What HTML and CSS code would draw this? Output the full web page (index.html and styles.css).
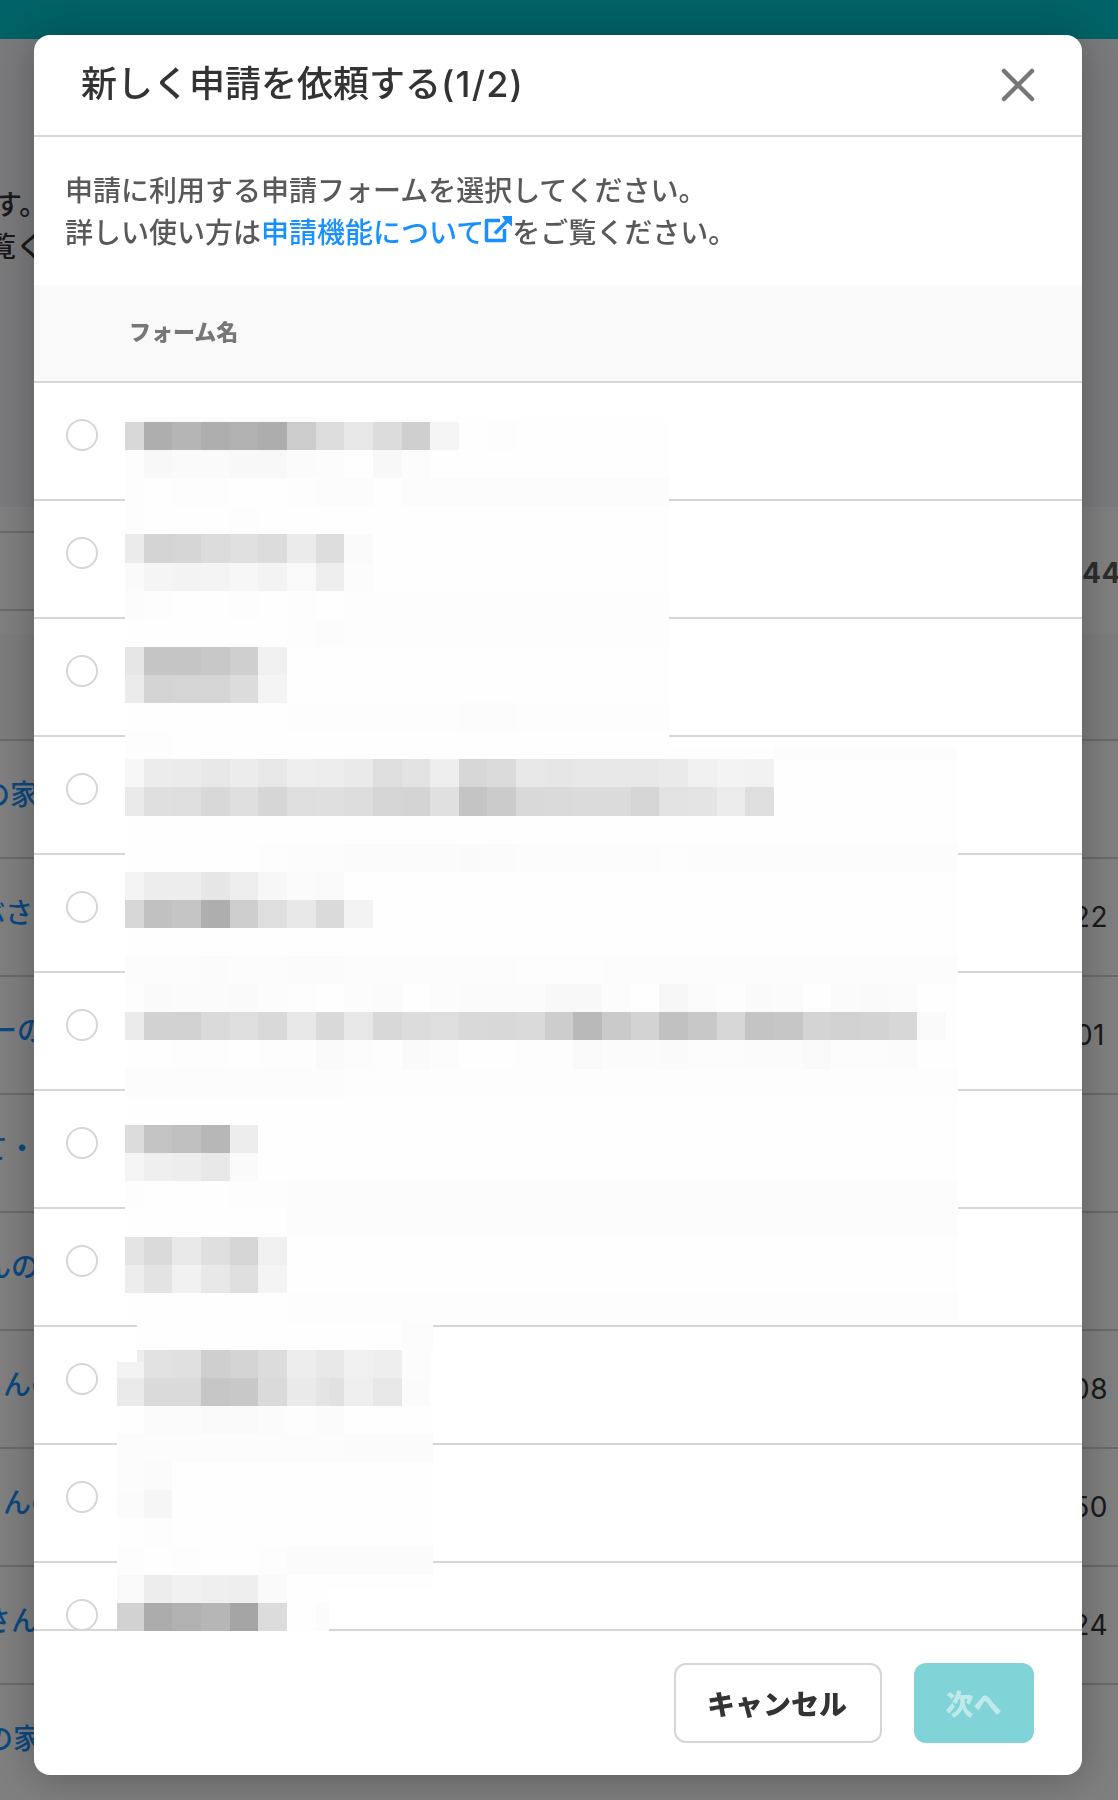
FILE: index.html
```html
<!DOCTYPE html>
<html lang="ja">
<head>
<meta charset="utf-8">
<title>新しく申請を依頼する</title>
<link rel="stylesheet" href="styles.css">
</head>
<body>
<div class="page">
  <header class="topbar"></header>
  <section class="intro"><p class="intro-end">す。</p><p class="intro-more">覧く</p></section>
  <section class="panel">
    <div class="toolbar"><div class="filter"></div><strong class="count">44</strong></div>
    <div class="table-head"></div>
    <div class="entry"><a>の家</a></div>
    <div class="entry"><a>ぶさ</a><span>22</span></div>
    <div class="entry"><a>ーの</a><span class="one">01</span></div>
    <div class="entry"><a>て・</a></div>
    <div class="entry"><a>んの</a></div>
    <div class="entry"><a>んの</a><span>08</span></div>
    <div class="entry"><a>んの</a><span>50</span></div>
    <div class="entry"><a>さん</a><span>24</span></div>
    <div class="entry"><a>の家</a></div>
  </section>
</div>
<div class="overlay">
  <div class="modal" role="dialog" aria-modal="true">
    <header class="modal-header">
      <h1>新しく申請を依頼する<span class="step">(1/2)</span></h1>
      <button class="close" aria-label="閉じる"><svg width="34" height="34" viewBox="0 0 34 34"><path d="M3 3 31 31M31 3 3 31"/></svg></button>
    </header>
    <div class="lead">
      <p>申請に利用する申請フォームを選択してください。</p>
      <p>詳しい使い方は<a>申請機能について<svg class="external" width="28" height="28" viewBox="0 0 28 28"><path d="M16 4.5H2.5V24.5H20.500V13" /><path d="M11 17.500 23.500 4.500"/><path class="tip" d="M18 0H28V10.500L24.500 7.500 20 3.500Z"/></svg></a>をご覧ください。</p>
    </div>
    <div class="list-head">フォーム名</div>
    <div class="list">
      <label class="option"><i class="radio"></i></label>
      <label class="option"><i class="radio"></i></label>
      <label class="option"><i class="radio"></i></label>
      <label class="option"><i class="radio"></i></label>
      <label class="option"><i class="radio"></i></label>
      <label class="option"><i class="radio"></i></label>
      <label class="option"><i class="radio"></i></label>
      <label class="option"><i class="radio"></i></label>
      <label class="option"><i class="radio"></i></label>
      <label class="option"><i class="radio"></i></label>
      <label class="option"><i class="radio"></i></label>
    </div>
    <footer class="modal-footer">
      <button class="btn cancel">キャンセル</button>
      <button class="btn next" disabled>次へ</button>
    </footer>
    <svg class="mosaic" id="mosaic" width="1048" height="1740" viewBox="34 35 1048 1740" shape-rendering="crispEdges"></svg>
  </div>
</div>
<script src="mosaic.js"></script>
</body>
</html>
```
FILE: styles.css
```css
* { box-sizing: border-box; }
body {
  margin: 0;
  height: 1800px;
  overflow: hidden;
  font-family: "Noto Sans CJK JP", sans-serif;
  font-size: 28px;
  font-weight: 500;
  line-height: 42px;
  color: #333;
}
p, h1 { margin: 0; }
button { font: inherit; border: 0; padding: 0; background: none; }

/* Page behind the dialog */
.page { height: 1800px; overflow: hidden; background: #f4f5f9; }
.topbar { height: 39px; background: #00c4cc; }
.intro { height: 468px; padding-top: 143px; white-space: nowrap; }
.intro-end { margin-left: -6px; }
.intro-more { margin-left: -12px; }
.panel { background: #fff; }
.toolbar { display: flex; height: 128px; padding-top: 24px; }
.filter { width: 500px; height: 80px; border: 2px solid #d6d4d4; border-left: 0; }
.count { margin: 21px 0 0 auto; width: 36px; font-family: Inter, sans-serif; font-weight: 700; color: #595959; line-height: 42px; letter-spacing: .5px; }
.table-head { height: 106px; background: #f8f8f8; border-bottom: 2px solid #d6d4d4; }
.entry { display: flex; justify-content: space-between; height: 118px; padding-top: 31px; border-bottom: 2px solid #d6d4d4; white-space: nowrap; }
.entry a { color: #1890ff; margin-left: -18px; }
.entry span { font-family: Inter, sans-serif; font-weight: 400; letter-spacing: .5px; margin: 6px 10px 0 0; }
.entry .one { margin-right: 13px; }
.entry:nth-child(4) a { margin-left: -23px; }
.entry:nth-child(5) a { margin-left: -11px; }
.entry:nth-child(6) a { margin-left: -20px; }
.entry:nth-child(7) a { margin-left: -17px; }
.entry:nth-child(8) a, .entry:nth-child(9) a { margin-left: 3px; }
.entry:nth-child(10) a { margin-left: -17px; }
.entry:nth-child(11) a { margin-left: -15px; }

/* Dialog */
.overlay { position: fixed; inset: 0; display: grid; padding: 35px 36px 25px 34px; background: rgba(0, 0, 0, .5); }
.modal {
  position: relative;
  display: flex;
  flex-direction: column;
  height: 1740px;
  overflow: hidden;
  background: #fff;
  border-radius: 16px;
  box-shadow: 0 4px 40px rgba(0, 0, 0, .27);
}
.modal-header { display: flex; justify-content: space-between; align-items: center; height: 102px; padding: 0 47px; border-bottom: 2px solid #d6d6d6; }
.modal-header h1 { font-size: 36px; font-weight: 500; line-height: 54px; margin-top: -6px; }
.step { font-family: Inter, sans-serif; font-weight: 450; letter-spacing: 1.2px; }
.close { display: flex; }
.close svg { fill: none; stroke: #777; stroke-width: 4.500; stroke-linecap: round; }
.lead { height: 148px; padding: 31px 31px 0; color: #595959; }
.lead a { color: #1890ff; }
.external { margin: 0; vertical-align: -1px; fill: none; stroke: #1890ff; stroke-width: 3.500; stroke-linejoin: round; }
.external .tip { fill: #1890ff; stroke: none; }
.list-head { height: 98px; padding: 0 95px; background: #f9f9f9; border-bottom: 2px solid #d6d6d6; color: #777; font-size: 22px; font-weight: 900; line-height: 91px; }
.list { flex: 1; min-height: 0; overflow: hidden; }
.option { display: block; height: 118px; padding: 36px 32px; border-bottom: 2px solid #d6d6d6; }
.radio { display: block; width: 32px; height: 32px; border: 2px solid #d6d6d6; border-radius: 50%; background: #fff; }
.modal-footer { display: flex; justify-content: flex-end; gap: 32px; height: 146px; padding: 32px 48px; border-top: 2px solid #d6d6d6; }
.btn { height: 80px; border-radius: 12px; font-weight: 900; }
.cancel { width: 208px; border: 2px solid #d6d6d6; color: #333; padding-right: 2px; }
.next { width: 120px; background: #80d3d6; color: #bfe9ea; padding-right: 1px; }
.mosaic { position: absolute; left: 0; top: 0; pointer-events: none; }
```
FILE: mosaic.js
```js
// Pixelated cover over the form names: [row, left edge, grey level per cell, right edge of the last cell]
const strips = [
  [0, 125, 'd8 ae b5 ae b1 ad cc dd e7 dc cf f5 fe fd'],
  [1, 125, 'fd f8 fa fa f8 f8 fb fc fe f8 fc'],
  [2, 125, 'fd fe fd fd fe fe fd fc fc fe fc', 669],
  [3, 125, 'fd fe fe fe fd fe fe fe fe fe', 669],
  [4, 125, 'eb d4 d6 dc e0 dc eb dd fa'],
  [5, 125, 'fa f5 f3 f4 f7 f3 f9 ee fc'],
  [6, 125, 'fc fd fe fe fd fe fd fe fd', 669],
  [7, 125, 'fe fe fe fe fe fe fd fc fd', 669],
  [8, 125, 'e6 c5 c5 c8 cf f0'],
  [9, 125, 'eb d4 d5 d5 dc f4'],
  [10, 125, 'fe fe fe fe fe fe fd fd fd fd fd fd fc fc fd', 669],
  [11, 125, 'fd fd fe'],
  [12, 125, 'f7 ec eb e8 ec e7 ee ed ea de e3 ee d7 db e8 e6 e8 e8 e8 ea f0 f3 f2'],
  [13, 125, 'ea df de d8 df d6 de df dd d5 d4 e0 c4 cb d9 da db db d5 e3 e4 ec de'],
  [15, 125, 'fe fe fe fe fe fd fc fc fb fb fb fb fa fb fc fc fc fc fc fd fc', 958],
  [16, 125, 'f4 ed ed e6 ee f7 fb f9 fe'],
  [17, 125, 'd7 c1 c5 ae ce de e8 da f3'],
  [19, 125, 'fc fc fc fb fc fc fb fb fc fc fc fc fc fc fd fd fd fc', 958],
  [20, 125, 'fd fa fb fb fa fc fd fe fc fb fe fc fb fb fb f8 f8 fc fe f7 fb fd fa fb fe fb fa fb'],
  [21, 125, 'eb d2 d2 da df d9 e7 d9 e7 d8 dc de d9 d8 da cd b9 ca d3 c1 c8 d7 c4 c6 d4 d2 d3 d7 fa'],
  [22, 125, 'fe fe fd fd fe fd fd f9 fc fd fa fc fe fe fd fd f9 fb fb fa fc fc fb fb f9 fc fc fb'],
  [23, 125, 'fc fc fc fc fc fc fc fc fd', 958],
  [25, 125, 'dc c4 c0 b7 ed'],
  [26, 125, 'f5 ef ed e8 fa'],
  [27, 125, 'fd fe fe fe fd fd fc', 958],
  [28, 125, 'fe fe fe fe fe fe fc', 958],
  [29, 125, 'e4 da e9 df d5 f0'],
  [30, 125, 'ed e3 f1 e8 df f4'],
  [31, 125, 'fe fe fe fe fe fe fd', 958],
  [32, 137, 'fe fe fe fe fe fe fe fe fe fe fc', 433],
  [33, 137, 'ed e2 e0 cf d4 dc ed e8 f0 ee fc'],
  [34, 117, 'ea da da c6 c8 da ea e4 ef e7 fb'],
  [35, 117, 'fe fb fb f9 f9 fb fd fb'],
  [36, 117, 'fc fc fc fc fc fc fc fc fb', 433],
  [37, 117, 'fc fb fe'],
  [38, 117, 'fb f6'],
  [39, 117, 'fe fd'],
  [40, 117, 'fd fe fd fe fe fd fb', 433],
  [41, 117, 'f9 ed f1 ef ee fa'],
  [42, 117, 'd2 ac b1 b6 a5 dc fe fb', 329]
];
const svg = document.getElementById('mosaic');
function block(x1, y1, x2, y2, level) {
  const r = document.createElementNS('http://www.w3.org/2000/svg', 'rect');
  r.setAttribute('x', x1);
  r.setAttribute('y', y1);
  r.setAttribute('width', x2 - x1);
  r.setAttribute('height', y2 - y1);
  r.setAttribute('fill', '#' + level.repeat(3));
  svg.appendChild(r);
}
const column = j => Math.round(143.7 + 28.65 * (j - 1));
const line = k => Math.round(422 + 28.11 * k);

// Blank areas that hide the row separators
block(125, 417, 669, 747, 'fe');
block(125, 747, 958, 1321, 'fe');
block(137, 1321, 433, 1362, 'fe');
block(117, 1362, 433, 1589, 'fe');
block(117, 1589, 329, 1631, 'fe');
block(144, 417, 316, 422, 'fb');
block(402, 417, 430, 422, 'fc');
block(774, 747, 958, 760, 'fc');

strips.forEach(([k, left, cells, end]) => {
  const levels = cells.split(' ');
  levels.forEach((level, j) => {
    const x1 = j === 0 ? left : column(j);
    const last = j === levels.length - 1;
    block(x1, line(k), last && end ? end : column(j + 1), k === 42 ? 1631 : line(k + 1), level);
  });
});
block(117, 1362, 144, 1378, 'f3');
block(329, 1378, 344, 1406, 'e1');
```
